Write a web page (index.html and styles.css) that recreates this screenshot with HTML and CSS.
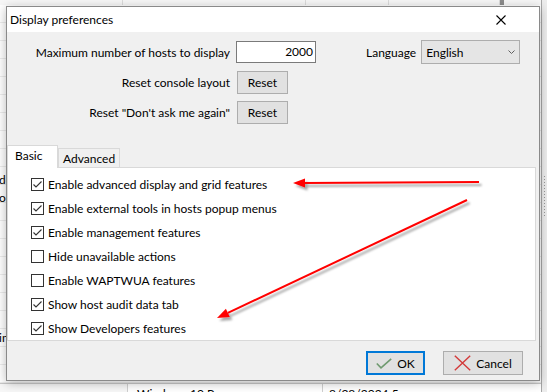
FILE: index.html
```html
<!DOCTYPE html>
<html>
<head>
<meta charset="utf-8">
<link rel="stylesheet" href="styles.css">
</head>
<body>
<div class="backdrop">
  <div class="list">
    <div class="list-header"><span class="hcell w1"></span><span class="hcell w2"></span><span class="hcell w3"></span><span class="hcell w4"></span><span class="hcell thumb"></span></div>
    <div class="row"></div><div class="row"></div><div class="row"></div><div class="row"></div>
    <div class="row"></div><div class="row"></div><div class="row"></div><div class="row"></div>
    <div class="row"></div><div class="row low"><span class="cut">de</span></div><div class="row low"><span class="cut">or</span></div><div class="row"></div>
    <div class="row"></div><div class="row"></div><div class="row"></div><div class="row"></div>
    <div class="row"></div><div class="row"></div><div class="row"><span class="cut">in</span></div><div class="row"></div>
    <div class="row"></div>
    <div class="row last"><span class="c1"></span><span class="c2">Windows 10 Pro</span><span class="c3">8/28/2024 5:</span></div>
  </div>
  <div class="splitter"><span class="grip"></span></div>
</div>

<div class="dialog">
  <div class="titlebar">
    <span class="title">Display preferences</span>
    <svg class="close" width="10" height="10" viewBox="0 0 10 10"><path d="M0.5 0.5 L9.5 9.5 M9.5 0.5 L0.5 9.5" stroke="#000" stroke-width="1.1" fill="none"/></svg>
  </div>
  <div class="body">
    <div class="settings">
      <span class="lbl">Maximum number of hosts to display</span>
      <div class="ctl-row">
        <div class="num">2000</div>
        <span class="lang-lbl">Language</span>
        <div class="select"><span>English</span><svg width="7" height="4" viewBox="0 0 7 4"><path d="M0.5 0.5 L3.5 3.5 L6.5 0.5" stroke="#606060" fill="none" stroke-width="1"/></svg></div>
      </div>
      <span class="lbl">Reset console layout</span>
      <div class="ctl-row"><button class="btn reset">Reset</button></div>
      <span class="lbl">Reset "Don't ask me again"</span>
      <div class="ctl-row"><button class="btn reset">Reset</button></div>
    </div>

    <div class="tabs">
      <div class="tab active">Basic</div>
      <div class="tab">Advanced</div>
    </div>
    <div class="panel">
      <div class="chk"><span class="box on"></span>Enable advanced display and grid features</div>
      <div class="chk"><span class="box on"></span>Enable external tools in hosts popup menus</div>
      <div class="chk"><span class="box on"></span>Enable management features</div>
      <div class="chk"><span class="box"></span>Hide unavailable actions</div>
      <div class="chk"><span class="box"></span>Enable WAPTWUA features</div>
      <div class="chk"><span class="box on"></span>Show host audit data tab</div>
      <div class="chk"><span class="box on"></span>Show Developers features</div>
    </div>
    <div class="footer">
      <button class="btn ok">
        <svg width="16" height="11" viewBox="0 0 16 11"><path d="M0.8 5.5 L5 9.8 L15.2 0.8" stroke="#6f9a6f" stroke-width="1.6" fill="none"/></svg>
        <span>OK</span>
      </button>
      <button class="btn cancel">
        <svg width="17" height="16" viewBox="0 0 17 16"><path d="M0.8 0.8 L16.2 15.2 M16.2 0.8 L0.8 15.2" stroke="#d33a3a" stroke-width="1.4" fill="none"/></svg>
        <span>Cancel</span>
      </button>
    </div>
  </div>
</div>

<svg class="annot" width="547" height="392" viewBox="0 0 547 392">
  <defs>
    <filter id="sh" x="-10%" y="-50%" width="120%" height="200%">
      <feDropShadow dx="2.5" dy="3" stdDeviation="1.3" flood-color="#000" flood-opacity="0.35"/>
    </filter>
  </defs>
  <g filter="url(#sh)">
    <line x1="479" y1="182" x2="303" y2="183" stroke="#ff0000" stroke-width="2"/>
    <polygon points="293,183 305,178.5 305,187.5" fill="#ff0000"/>
    <line x1="467" y1="200" x2="227.9" y2="312.9" stroke="#ff0000" stroke-width="2"/>
    <polygon points="217,318 229.8,317 225.9,308.8" fill="#ff0000"/>
  </g>
</svg>
</body>
</html>
```
FILE: styles.css
```css
* { box-sizing: border-box; margin: 0; padding: 0; }
html, body { width: 547px; height: 392px; overflow: hidden; }
body {
  font-family: "Lato", "Noto Sans", sans-serif;
  font-size: 12px;
  color: #000;
  background: #fff;
  position: relative;
}

/* background window (list view) */
.backdrop { display: flex; height: 392px; }
.list { flex: 1; display: flex; flex-direction: column; overflow: hidden; }
.list-header {
  height: 5px; flex: none;
  background: #f7f7f7;
  display: flex;
}
.hcell { border-right: 1px solid #dcdcdc; height: 5px; }
.w1 { width: 123px; }
.w2 { width: 183px; }
.w3 { width: 83px; }
.w4 { width: 111px; }
.thumb { width: 4px; background: #8c8c8c; border: none; }
.row {
  height: 18px; flex: none;
  border-bottom: 1px solid #ececec;
  display: flex;
  line-height: 17px;
  white-space: nowrap;
}
.row.low { line-height: 26px; }
.cut { margin-left: -1px; }
.row.last { border-top: 1px solid #c8c8c8; line-height: 20px; }
.c1 { width: 128px; border-right: 1px solid #d0d0d0; background: #f7f7f7; }
.c2 { width: 195px; padding-left: 9px; border-right: 1px solid #d0d0d0; }
.c3 { padding-left: 6px; }
.splitter {
  width: 6px; flex: none;
  background: #ededed;
  border-left: 1px solid #a8a8a8;
  display: flex; align-items: center; justify-content: center;
}
.grip {
  width: 1px; height: 40px;
  background: repeating-linear-gradient(#9a9a9a 0 1px, transparent 1px 3px);
}

/* dialog window */
.dialog {
  position: absolute; left: 6px; top: 6px;
  width: 534px; height: 375px;
  border: 1px solid #8a8a8a;
  background: #f0f0f0;
  box-shadow: 0 2px 10px rgba(0,0,0,0.28);
  display: flex; flex-direction: column;
}
.titlebar {
  height: 25px; flex: none;
  background: #fff;
  display: flex; align-items: center; justify-content: space-between;
  padding-left: 3px;
}
.close { margin-right: 33px; }
.body { flex: 1; display: flex; flex-direction: column; padding-top: 8px; }

.settings {
  display: grid;
  grid-template-columns: 223px 1fr;
  column-gap: 6px;
  row-gap: 7px;
  align-items: center;
}
.lbl { text-align: right; white-space: nowrap; }
.ctl-row { display: flex; align-items: center; }
.num {
  width: 80px; height: 22px;
  background: #fff;
  border: 1px solid #7a7a7a;
  text-align: right;
  padding-right: 2px;
  line-height: 20px;
}
.lang-lbl { margin-left: 50px; margin-right: 5px; }
.select {
  width: 99px; height: 24px;
  background: #e5e5e5;
  border: 1px solid #adadad;
  display: flex; align-items: center; justify-content: space-between;
  padding: 0 4px 0 4px;
}
.btn {
  font: inherit; color: #000;
  background: #e1e1e1;
  border: 1px solid #adadad;
  display: flex; align-items: center; justify-content: center;
}
.reset { width: 51px; height: 23px; margin-left: 1px; }

.tabs { display: flex; align-items: flex-end; height: 22px; margin-top: 21px; flex: none; }
.tab {
  height: 19px;
  border: 1px solid #d9d9d9; border-bottom: none;
  background: #f0f0f0;
  padding: 2px 4px 0 4px;
  width: 62px;
}
.tab.active {
  position: relative; z-index: 1;
  height: 23px; width: 51px;
  margin-bottom: -1px;
  background: #fff;
  padding: 2px 7px 0 7px;
}
.panel {
  height: 174px; flex: none;
  margin-right: 3px;
  background: #fff;
  border: 1px solid #d9d9d9;
  padding: 4px 0 0 23px;
}
.chk { height: 24px; display: flex; align-items: center; gap: 4px; white-space: nowrap; }
.box {
  width: 13px; height: 13px; flex: none;
  border: 1px solid #333;
  background: #fff;
}
.box.on {
  background: #fff url("data:image/svg+xml,%3Csvg xmlns='http://www.w3.org/2000/svg' width='11' height='11' viewBox='0 0 11 11'%3E%3Cpath d='M1.5 5.5 L4 8 L9.5 2.5' stroke='%23333' stroke-width='1.1' fill='none'/%3E%3C/svg%3E") no-repeat center;
}

.footer { display: flex; justify-content: flex-end; gap: 18px; margin-top: 10px; padding-right: 16px; }
.ok { width: 59px; height: 24px; border: 2px solid #0078d7; gap: 5px; }
.cancel { width: 80px; height: 24px; gap: 5px; }

.annot { position: absolute; left: 0; top: 0; pointer-events: none; }
```
